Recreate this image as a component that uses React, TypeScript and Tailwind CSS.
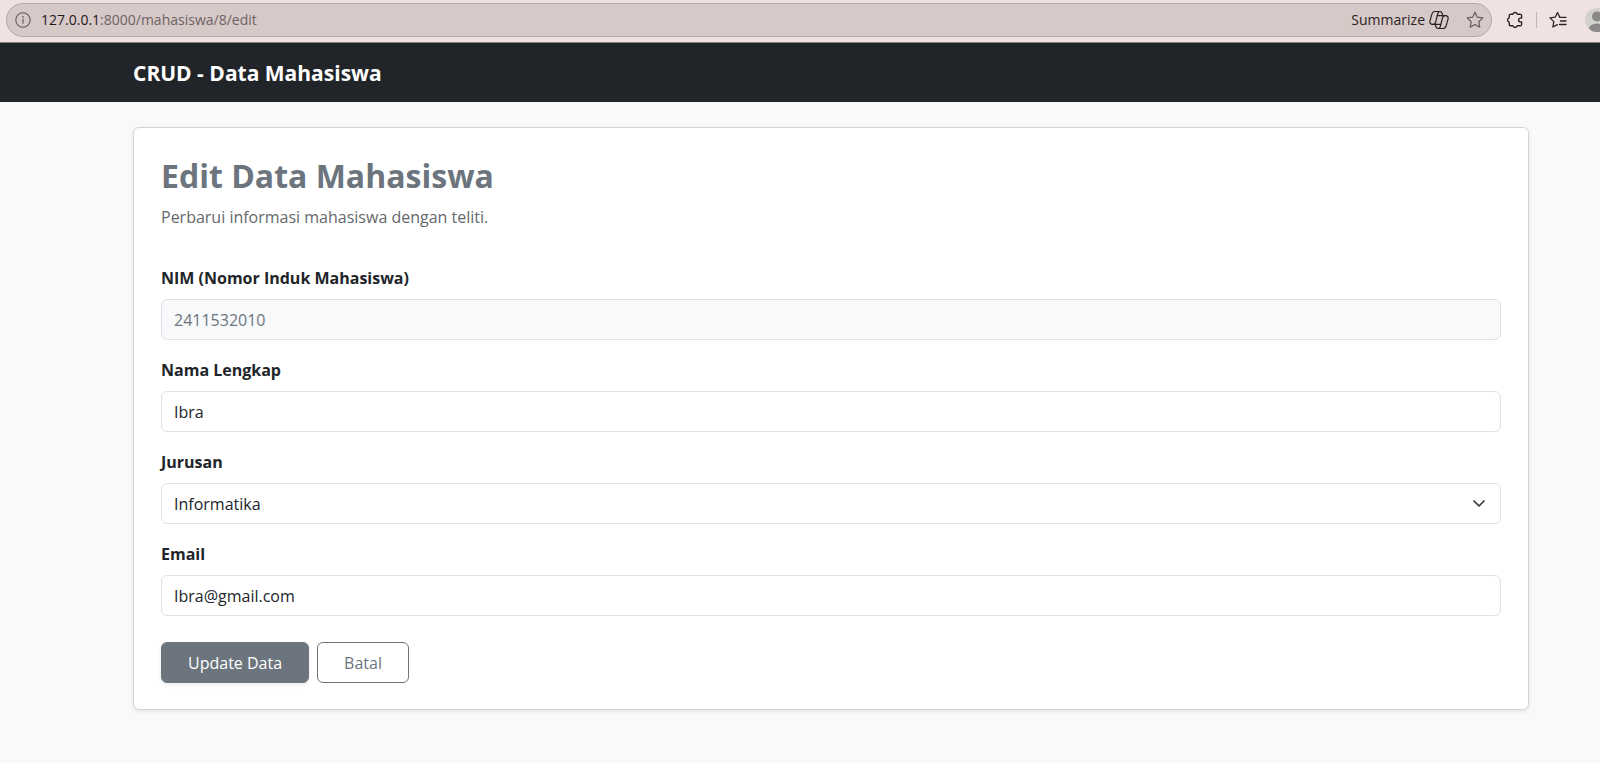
import React, { useState } from "react";

const focusRing =
  "focus:outline-none focus:ring-4 focus:ring-[#0d6efd]/25";
const controlClass =
  "block h-[41px] w-full rounded-md border border-[#dee2e6] px-3 text-base text-[#212529] " +
  focusRing;

function InfoIcon() {
  return (
    <svg className="size-4" viewBox="0 0 16 16" fill="none" stroke="currentColor" aria-hidden="true">
      <circle cx="8" cy="8" r="7.2" strokeWidth="1.1" />
      <path d="M8 7.2v4" strokeWidth="1.2" strokeLinecap="round" />
      <circle cx="8" cy="4.9" r="0.8" fill="currentColor" stroke="none" />
    </svg>
  );
}

function CopilotIcon() {
  return (
    <svg className="size-5" viewBox="0 0 20 20" fill="none" stroke="currentColor" strokeWidth="1.2" strokeLinejoin="round" strokeLinecap="round" aria-hidden="true">
      <path d="M5.800 1.500H10.800C12.300 1.500 12.900 2.300 13.200 3.500L13.800 5.700H16.500C18.600 5.700 19.500 7.200 19 9.200L17.200 15.600C16.600 17.600 15.600 18.500 14 18.500H9.300C7.700 18.500 7.100 17.700 6.800 16.500L6.200 14.300H3.500C1.400 14.300.5 12.800 1 10.800L2.800 4.400C3.400 2.400 4.400 1.500 5.800 1.500Z" />
      <path d="M10.800 1.500C9.700 1.500 9.100 2.300 8.800 3.500L6.700 11.800C6.300 13.500 5.500 14.300 4.200 14.300" />
      <path d="M9.300 18.500C10.400 18.500 11 17.700 11.300 16.500L13.400 8.200C13.800 6.500 14.600 5.700 15.900 5.700" />
      <path d="M8.300 5.700H13.800M6.200 14.300H11.700" />
    </svg>
  );
}

function StarIcon() {
  return (
    <svg className="size-[18px]" viewBox="0 0 18 18" fill="none" stroke="currentColor" strokeWidth="1.2" strokeLinejoin="round" aria-hidden="true">
      <path d="M9 1.200 11.350 6.200 16.800 6.900 12.800 10.700 13.800 16.200 9 13.500 4.200 16.200 5.200 10.700 1.200 6.900 6.650 6.200Z" />
    </svg>
  );
}

function ExtensionsIcon() {
  return (
    <svg className="size-[18px]" viewBox="0 0 18 18" fill="none" stroke="currentColor" strokeWidth="1.4" strokeLinejoin="round" aria-hidden="true">
      <path d="M4.800 3.200H6.900A2.300 2.300 0 0 1 11.300 3.200H13.800A1.500 1.500 0 0 1 15.600 4.700V7.100H14.500A1.900 1.900 0 0 0 14.500 10.900H15.600V13.300A1.500 1.500 0 0 1 13.800 14.800H11.300A2.300 2.300 0 0 1 6.900 14.800H4.800A1.500 1.500 0 0 1 3.200 13.300V11.200A2.300 2.300 0 0 1 3.200 6.800V4.700A1.500 1.500 0 0 1 4.800 3.200Z" />
    </svg>
  );
}

function FavoritesIcon() {
  return (
    <svg className="size-[18px]" viewBox="0 0 18 18" fill="none" stroke="currentColor" strokeWidth="1.3" strokeLinejoin="round" strokeLinecap="round" aria-hidden="true">
      <path d="M10.800 6.300 8.500 1.500 6.200 6.200 1 6.900 4.800 10.600 3.900 16 8.300 13.600" />
      <path d="M10.800 6.300H17M11.500 10H17M10.500 13.500H17" />
    </svg>
  );
}

function BrowserBar() {
  return (
    <div className="flex h-[43px] items-start overflow-hidden border-b border-[#8b8383] bg-[#f0e2e1] pt-[3px] pl-1.5 text-[#2b2424]">
      <div className="flex h-[34px] min-w-0 flex-1 items-center rounded-full border border-[#b5a8a7] bg-[#d6c9c8] pr-[7px] pl-2">
        <button type="button" aria-label="Site information" className="text-[#675d5c]">
          <InfoIcon />
        </button>
        <span className="ml-2.5 flex-1 truncate text-sm text-[#6d6362]">
          <span className="text-[#211b1b]">127.0.0.1</span>:8000/mahasiswa/8/edit
        </span>
        <button type="button" className="flex items-center gap-1 text-sm">
          Summarize
          <CopilotIcon />
        </button>
        <button type="button" aria-label="Add to favorites" className="ml-[17px] text-[#675d5c]">
          <StarIcon />
        </button>
      </div>
      <div className="flex h-[34px] w-[108px] shrink-0 items-center">
        <button type="button" aria-label="Extensions" className="ml-3.5 shrink-0">
          <ExtensionsIcon />
        </button>
        <span className="ml-3 h-4 w-px shrink-0 bg-[#c2b5b4]" />
        <button type="button" aria-label="Favorites" className="ml-3 shrink-0">
          <FavoritesIcon />
        </button>
        <button type="button" aria-label="Profile" className="ml-[18px] shrink-0">
          <svg className="size-6" viewBox="0 0 24 24" aria-hidden="true">
            <clipPath id="avatar">
              <circle cx="12" cy="12" r="12" />
            </clipPath>
            <g clipPath="url(#avatar)">
              <path d="M0 0h24v24H0z" fill="#d3d1ce" />
              <circle cx="12" cy="8.500" r="5" fill="#8b8988" />
              <ellipse cx="12" cy="21" rx="8" ry="5.500" fill="#8b8988" />
            </g>
          </svg>
        </button>
      </div>
    </div>
  );
}

function Field({ id, label, children }: { id: string; label: string; children: React.ReactNode }) {
  return (
    <div>
      <label htmlFor={id} className="mb-2 block text-base leading-[25px] font-bold">
        {label}
      </label>
      {children}
    </div>
  );
}

export default function App() {
  const [name, setName] = useState("Ibra");
  const [major, setMajor] = useState("Informatika");
  const [email, setEmail] = useState("Ibra@gmail.com");

  return (
    <div className="min-h-screen bg-[#f8f9fb] font-['Open_Sans','Noto_Sans',sans-serif] text-[#212529]">
      <BrowserBar />
      <header className="flex h-[59px] items-center bg-[#212529] pl-[133px]">
        <a href="#" className="text-[21px] leading-[30px] font-bold text-white">
          CRUD - Data Mahasiswa
        </a>
      </header>
      <main className="pt-[25px] pr-[71px] pb-[53px] pl-[133px]">
        <section className="rounded-md border border-[#d3d4d5] bg-white px-[27px] py-[26px] shadow-[0_2px_4px_rgba(0,0,0,0.075)]">
          <h1 className="text-[32px] leading-[44px] font-bold text-[#6c757d]">Edit Data Mahasiswa</h1>
          <p className="mt-1.5 text-base leading-[26px] text-[#65686b]">
            Perbarui informasi mahasiswa dengan teliti.
          </p>
          <form className="mt-9" onSubmit={(e) => e.preventDefault()}>
            <div className="flex flex-col gap-[18px]">
              <Field id="nim" label="NIM (Nomor Induk Mahasiswa)">
                <input id="nim" readOnly value="2411532010" className="block h-[41px] w-full rounded-md border border-[#dee2e6] bg-[#f8f9fb] px-3 text-base text-[#6c757d] focus:outline-none" />
              </Field>
              <Field id="nama" label="Nama Lengkap">
                <input id="nama" value={name} onChange={(e) => setName(e.target.value)} className={controlClass} />
              </Field>
              <Field id="jurusan" label="Jurusan">
                <div className="relative">
                  <select id="jurusan" value={major} onChange={(e) => setMajor(e.target.value)} className={controlClass + " appearance-none bg-white"}>
                    <option>Informatika</option>
                    <option>Sistem Informasi</option>
                    <option>Teknik Komputer</option>
                  </select>
                  <svg className="pointer-events-none absolute top-3.5 right-4 size-3" viewBox="0 0 12 12" fill="none" stroke="#343a40" strokeWidth="1.700" strokeLinecap="round" strokeLinejoin="round" aria-hidden="true">
                    <path d="m1 4 5 5 5-5" />
                  </svg>
                </div>
              </Field>
              <Field id="email" label="Email">
                <input id="email" type="email" value={email} onChange={(e) => setEmail(e.target.value)} className={controlClass} />
              </Field>
            </div>
            <div className="mt-[26px] flex gap-2">
              <button type="submit" className="h-[41px] rounded-md border border-[#6c757d] bg-[#6c757d] px-[26px] text-base text-white shadow-[0_2px_4px_rgba(0,0,0,0.075)]">
                Update Data
              </button>
              <button type="button" className="h-[41px] rounded-md border border-[#6c757d] px-[26px] text-base text-[#6c757d]">
                Batal
              </button>
            </div>
          </form>
        </section>
      </main>
    </div>
  );
}
